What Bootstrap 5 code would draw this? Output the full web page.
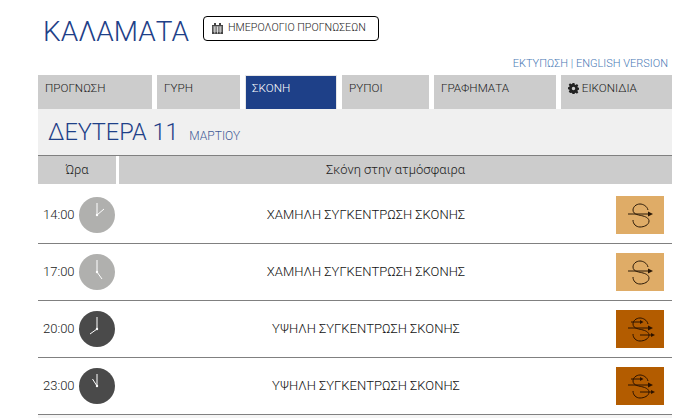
<!DOCTYPE html>
<html lang="el">
<head>
  <meta charset="UTF-8">
  <meta name="viewport" content="width=device-width, initial-scale=1">
  <title>Καλαμάτα</title>

  <link href="https://cdn.jsdelivr.net/npm/bootstrap@5.3.3/dist/css/bootstrap.min.css" rel="stylesheet">

  <style>
    body {
      font-family: Roboto, "Noto Sans", sans-serif;
      font-weight: 300;
      font-size: 12px;
      color: #222;
      background: #fff;
      overflow: hidden;
    }

    .page-wrap {
      width: 634px;
      margin-left: 38px;
    }

    .top-head {
      height: 57px;
      padding-left: 5px;
      padding-top: 16px;
      gap: 14px;
    }

    .city-name {
      font-size: 28px;
      font-weight: 300;
      line-height: 32px;
      color: #1e4088;
      margin: 0;
    }

    .cal-btn {
      font-size: 10.7px;
      font-weight: 300;
      color: #222;
      height: 25px;
      width: 176px;
      border: 1px solid #000;
      border-radius: 4px;
      padding: 0 0 0 8px;
      gap: 5px;
      background: #fff;
    }

    .top-links {
      height: 18px;
      font-size: 11px;
      line-height: 14px;
      color: #4a7ab5;
      text-align: right;
      padding-right: 4px;
    }

    .top-links a {
      color: #4a7ab5;
      text-decoration: none;
    }

    .tab-row {
      gap: 5px;
    }

    .tab-item {
      display: block;
      height: 34px;
      background: #ccc;
      color: #222;
      font-size: 11.7px;
      line-height: 14px;
      padding: 6px 7px;
      text-decoration: none;
    }

    .tab-item.on {
      background: #1e4088;
      color: #fff;
      border: 1px solid #e6e6e6;
      border-bottom: 0;
      padding: 5px 6px;
    }

    .w-a { width: 114px; }
    .w-b { width: 83px; }
    .w-c { width: 92px; }
    .w-d { width: 87px; }
    .w-e { width: 122px; }
    .w-f { width: 111px; }

    .day-bar {
      height: 46px;
      background: #f0f0f0;
      padding: 7px 0 0 10px;
      color: #1e4088;
      font-size: 23.5px;
      line-height: 32px;
    }

    .day-bar small {
      font-size: 12px;
      margin-left: 5px;
      color: #3f5a96;
    }

    .head-row {
      border-top: 1px solid #808080;
      height: 29px;
      gap: 3px;
      font-size: 13px;
      line-height: 27px;
      text-align: center;
    }

    .head-row div {
      background: #ccc;
    }

    .head-time { width: 78px; }
    .head-main { flex: 1; }

    .data-row {
      height: 57px;
      border-bottom: 1px solid #808080;
    }

    .data-row.first {
      height: 60px;
      padding-top: 2px;
    }

    .row-time {
      width: 78px;
      padding-left: 5px;
      gap: 4px;
      font-size: 13px;
    }

    .row-text {
      flex: 1;
      text-align: center;
      font-size: 13px;
      font-weight: 300;
      color: #111;
    }

    .row-icon {
      width: 48px;
      height: 38px;
      margin-right: 8px;
    }

    .tail-strip {
      height: 20px;
      background: #f5f5f5;
    }
  </style>
</head>
<body>

<div class="page-wrap">
  <div class="d-flex align-items-start top-head">
    <h1 class="city-name">ΚΑΛΑΜΑΤΑ</h1>
    <button type="button" class="btn d-flex align-items-center cal-btn">
      <svg width="11" height="11" viewBox="0 0 11 11"><path fill="#444" d="M2 0h2v2H7V0h2v2h2v9H0V2h2z"/><path stroke="#fff" stroke-width=".7" fill="none" d="M.8 4h9.4M.8 6h9.4M.8 8h9.4M2.8 3.5v7M5.5 3.5v7M8.2 3.5v7"/></svg>
      ΗΜΕΡΟΛΟΓΙΟ ΠΡΟΓΝΩΣΕΩΝ
    </button>
  </div>
  <div class="top-links"><a href="#">ΕΚΤΥΠΩΣΗ</a> | <a href="#">ENGLISH VERSION</a></div>

  <div class="d-flex tab-row">
    <a class="tab-item w-a" href="#">ΠΡΟΓΝΩΣΗ</a>
    <a class="tab-item w-b" href="#">ΓΥΡΗ</a>
    <a class="tab-item w-c on" href="#">ΣΚΟΝΗ</a>
    <a class="tab-item w-d" href="#">ΡΥΠΟΙ</a>
    <a class="tab-item w-e" href="#">ΓΡΑΦΗΜΑΤΑ</a>
    <a class="tab-item w-f" href="#">
      <svg width="11" height="11" viewBox="0 0 16 16"><path fill="#222" fill-rule="evenodd" d="M6.6 0h2.8l.4 2.2 1.4.6L13 1.5l2 2-1.3 1.8.6 1.4 2.2.4v2.8l-2.2.4-.6 1.4 1.3 1.8-2 2-1.8-1.3-1.4.6-.4 2.2H6.6l-.4-2.2-1.4-.6L3 14.5l-2-2 1.3-1.8-.6-1.4L-.5 8.9V6.1l2.2-.4.6-1.4L1 2.5l2-2 1.8 1.3 1.4-.6zM8 5.5a2.5 2.5 0 1 0 0 5 2.5 2.5 0 0 0 0-5z"/></svg>
      ΕΙΚΟΝΙΔΙΑ
    </a>
  </div>

  <div class="day-bar">ΔΕΥΤΕΡΑ 11 <small>ΜΑΡΤΙΟΥ</small></div>

  <div class="d-flex head-row">
    <div class="head-time">Ώρα</div>
    <div class="head-main">Σκόνη στην ατμόσφαιρα</div>
  </div>

  <div class="d-flex align-items-center data-row first">
    <div class="d-flex align-items-center row-time">14:00
      <svg width="36" height="36" viewBox="0 0 36 36"><circle cx="18" cy="18" r="18" fill="#b0b0ae"/><circle cx="18" cy="18" r="1.2" fill="#fff"/><path stroke="#fff" stroke-width="1" fill="none" d="M18 18V6M18 18l7-6"/></svg>
    </div>
    <div class="row-text">ΧΑΜΗΛΗ ΣΥΓΚΕΝΤΡΩΣΗ ΣΚΟΝΗΣ</div>
    <svg class="row-icon" viewBox="0 0 48 38"><rect width="48" height="38" fill="#dfac67"/><path fill="none" stroke="#2b1a08" stroke-width="1" d="M12 18h22M32 14C31 10 27 8 24 8C20 8 17 11 17 14C17 19 24 19 27 20C31 21 33 23 33 25C33 29 28 31 24 31C20 31 17 28 17 24"/><path fill="#2b1a08" d="M32 15.5l5 2.5-5 2.5z"/></svg>
  </div>

  <div class="d-flex align-items-center data-row">
    <div class="d-flex align-items-center row-time">17:00
      <svg width="36" height="36" viewBox="0 0 36 36"><circle cx="18" cy="18" r="18" fill="#b0b0ae"/><circle cx="18" cy="18" r="1.2" fill="#fff"/><path stroke="#fff" stroke-width="1" fill="none" d="M18 18V6M18 18l5 7"/></svg>
    </div>
    <div class="row-text">ΧΑΜΗΛΗ ΣΥΓΚΕΝΤΡΩΣΗ ΣΚΟΝΗΣ</div>
    <svg class="row-icon" viewBox="0 0 48 38"><rect width="48" height="38" fill="#dfac67"/><path fill="none" stroke="#2b1a08" stroke-width="1" d="M12 18h22M32 14C31 10 27 8 24 8C20 8 17 11 17 14C17 19 24 19 27 20C31 21 33 23 33 25C33 29 28 31 24 31C20 31 17 28 17 24"/><path fill="#2b1a08" d="M32 15.5l5 2.5-5 2.5z"/></svg>
  </div>

  <div class="d-flex align-items-center data-row">
    <div class="d-flex align-items-center row-time">20:00
      <svg width="36" height="36" viewBox="0 0 36 36"><circle cx="18" cy="18" r="18" fill="#4a4a4a"/><circle cx="18" cy="18" r="1.2" fill="#fff"/><path stroke="#fff" stroke-width="1" fill="none" d="M18 18V6M18 18l-7 5"/></svg>
    </div>
    <div class="row-text">ΥΨΗΛΗ ΣΥΓΚΕΝΤΡΩΣΗ ΣΚΟΝΗΣ</div>
    <svg class="row-icon" viewBox="0 0 48 38"><rect width="48" height="38" fill="#b35c00"/><path fill="none" stroke="#2b1200" stroke-width="1" d="M15 12h11M12 18h22M24 25h13M32 14C31 10 27 8 24 8C20 8 17 11 17 14C17 19 24 19 27 20C31 21 33 23 33 25C33 29 28 31 24 31C20 31 17 28 17 24"/><path fill="#2b1200" d="M32 15.5l5 2.5-5 2.5zM24 10l3.500 2-3.500 2zM35 23l4 2-4 2z"/></svg>
  </div>

  <div class="d-flex align-items-center data-row">
    <div class="d-flex align-items-center row-time">23:00
      <svg width="36" height="36" viewBox="0 0 36 36"><circle cx="18" cy="18" r="18" fill="#4a4a4a"/><circle cx="18" cy="18" r="1.2" fill="#fff"/><path stroke="#fff" stroke-width="1" fill="none" d="M18 18V6M18 18l-4.500-7"/></svg>
    </div>
    <div class="row-text">ΥΨΗΛΗ ΣΥΓΚΕΝΤΡΩΣΗ ΣΚΟΝΗΣ</div>
    <svg class="row-icon" viewBox="0 0 48 38"><rect width="48" height="38" fill="#b35c00"/><path fill="none" stroke="#2b1200" stroke-width="1" d="M15 12h11M12 18h22M24 25h13M32 14C31 10 27 8 24 8C20 8 17 11 17 14C17 19 24 19 27 20C31 21 33 23 33 25C33 29 28 31 24 31C20 31 17 28 17 24"/><path fill="#2b1200" d="M32 15.5l5 2.5-5 2.5zM24 10l3.500 2-3.500 2zM35 23l4 2-4 2z"/></svg>
  </div>

  <div class="tail-strip"></div>
</div>

<script src="https://cdn.jsdelivr.net/npm/bootstrap@5.3.3/dist/js/bootstrap.bundle.min.js"></script>
</body>
</html>
